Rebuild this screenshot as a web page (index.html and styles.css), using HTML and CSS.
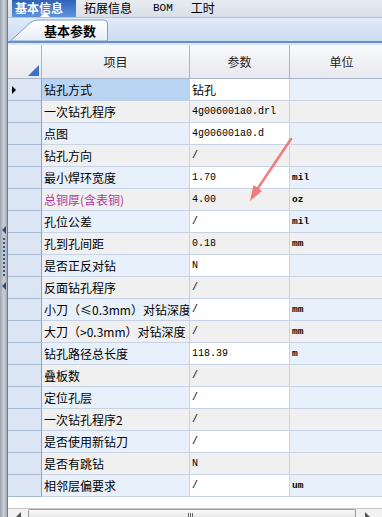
FILE: index.html
```html
<!DOCTYPE html>
<html lang="zh-CN">
<head>
    <meta charset="UTF-8">
    <title>基本参数</title>
    <link rel="stylesheet" href="styles.css">
</head>
<body>
    <div class="splitter">
        <span class="split-arrow"></span>
        <span class="split-grip"></span>
        <span class="split-arrow"></span>
    </div>

    <div class="main">
        <div class="tabbar">
            <div class="tab active">基本信息</div>
            <div class="tab t2">拓展信息</div>
            <div class="tab t3">BOM</div>
            <div class="tab t4">工时</div>
        </div>

        <div class="subtabs">
            <svg class="subtab-shape" width="100" height="24" viewBox="0 0 100 24">
                <defs>
                    <linearGradient id="tabfill" x1="0" y1="0" x2="0" y2="1">
                        <stop offset="0" stop-color="#ffffff"/>
                        <stop offset="1" stop-color="#e6eefa"/>
                    </linearGradient>
                </defs>
                <path d="M0.5 24 L21 5 Q24 3 28 3 L94 3 Q97.5 3 97.5 7 L97.5 24 Z" fill="url(#tabfill)" stroke="#7f9dcb" stroke-width="1"/>
            </svg>
            <span class="subtab-label">基本参数</span>
        </div>
        <div class="blue-line"></div>

        <div class="grid">
            <div class="hcell corner"><span class="corner-tri"></span></div>
            <div class="hcell">项目</div>
            <div class="hcell">参数</div>
            <div class="hcell">单位</div>
        </div>

        <div class="rows" id="rows"></div>

        <div class="scrollbar">
            <span class="sb-left"></span>
            <div class="sb-thumb"><span class="sb-grip"></span></div>
            <span class="sb-right"></span>
        </div>
    </div>

    <svg class="arrow" width="382" height="517" viewBox="0 0 382 517">
        <g opacity="0.85">
            <line x1="291" y1="139" x2="256" y2="191" stroke="#f06868" stroke-width="2.5" stroke-linecap="round"/>
            <polygon points="250,201 262,191 253.5,185" fill="#f06868"/>
        </g>
    </svg>

    <script>
        // filas de la tabla: [item, param, unidad, clase]
        const FILAS = [
            ['钻孔方式', '钻孔', '', 'cjk'],
            ['一次钻孔程序', '4g006001a0.drl', ''],
            ['点图', '4g006001a0.d', ''],
            ['钻孔方向', '/', ''],
            ['最小焊环宽度', '1.70', 'mil'],
            ['总铜厚(含表铜)', '4.00', 'oz', 'pink'],
            ['孔位公差', '/', 'mil'],
            ['孔到孔间距', '0.18', 'mm'],
            ['是否正反对钻', 'N', ''],
            ['反面钻孔程序', '/', ''],
            ['小刀（≤0.3mm）对钻深度', '/', 'mm'],
            ['大刀（>0.3mm）对钻深度', '/', 'mm'],
            ['钻孔路径总长度', '118.39', 'm'],
            ['叠板数', '/', ''],
            ['定位孔层', '/', ''],
            ['一次钻孔程序2', '/', ''],
            ['是否使用新钻刀', '/', ''],
            ['是否有跳钻', 'N', ''],
            ['相邻层偏要求', '/', 'um']
        ];

        const rows = document.getElementById('rows');
        FILAS.forEach(function (f, i) {
            const row = document.createElement('div');
            row.className = 'row ' + (i % 2 === 0 ? 'odd' : 'even');

            const head = document.createElement('div');
            head.className = 'rhead';
            if (i === 0) head.innerHTML = '<span class="pointer"></span>';

            const item = document.createElement('div');
            item.className = 'cell item' + (i === 0 ? ' selected' : '') + (f[3] === 'pink' ? ' pink' : '');
            item.textContent = f[0];

            const param = document.createElement('div');
            param.className = 'cell param' + (f[3] === 'cjk' ? ' cjk' : '');
            param.textContent = f[1];

            const unit = document.createElement('div');
            unit.className = 'cell unit';
            unit.textContent = f[2];

            row.append(head, item, param, unit);
            rows.appendChild(row);
        });
    </script>
</body>
</html>
```

FILE: styles.css
```css
body {
    margin: 0;
    width: 382px;
    height: 517px;
    overflow: hidden;
    display: flex;
    position: relative;
    background: #ffffff;
    font-family: "Noto Sans CJK SC", "DejaVu Sans", sans-serif;
    font-size: 12px;
    color: #000;
}

/* barra lateral izquierda */
.splitter {
    width: 7px;
    flex: none;
    border-right: 1px solid #6f7884;
    background: linear-gradient(to right, #9aa2ad, #c9ced6 50%, #a9b0ba);
    display: flex;
    flex-direction: column;
    align-items: center;
    padding-top: 226px;
    gap: 4px;
}
.split-arrow {
    width: 0;
    height: 0;
    border-top: 4px solid transparent;
    border-bottom: 4px solid transparent;
    border-right: 4px solid #2f4f7a;
}
.split-grip {
    width: 2px;
    height: 40px;
    background: repeating-linear-gradient(to bottom, #2f5a96 0 2px, transparent 2px 4px);
}

.main {
    flex: 1;
    min-width: 0;
    display: flex;
    flex-direction: column;
}

/* pestañas superiores */
.tabbar {
    height: 17px;
    flex: none;
    display: flex;
    padding-left: 4px;
    background: linear-gradient(to bottom, #e8ecf2, #d9dfe8);
    border-bottom: 1px solid #b9c3d1;
    overflow: hidden;
}
.tab {
    font-size: 12px;
    line-height: 16px;
    position: relative;
    white-space: nowrap;
}
.tab.t2 { margin-left: 8px; }
.tab.t3 {
    margin-left: 21px;
    font-family: "Liberation Mono", monospace;
    font-size: 11px;
}
.tab.t4 { margin-left: 18px; }
.tab.active {
    width: 61px;
    padding-left: 3px;
    color: #fff;
    font-weight: bold;
    background: linear-gradient(to bottom, #2f63b8, #5e93dc);
}
.tab.active::after {
    content: "";
    position: absolute;
    left: 28px;
    bottom: 0;
    border-left: 5px solid transparent;
    border-right: 5px solid transparent;
    border-bottom: 5px solid #fff;
}

/* pestaña secundaria */
.subtabs {
    height: 23px;
    flex: none;
    position: relative;
    background: linear-gradient(to bottom, #e2ebf8, #cadbf3);
}
.subtab-shape {
    position: absolute;
    left: 2px;
    bottom: 0;
}
.subtab-label {
    position: absolute;
    left: 36px;
    top: 5px;
    font-weight: bold;
    font-size: 13px;
    line-height: 16px;
}
.blue-line {
    height: 2px;
    flex: none;
    background: #6a8fc6;
    border-bottom: 2px solid #dce7f6;
}

/* cabecera de la tabla */
.grid {
    display: grid;
    grid-template-columns: 34px 148px 100px 104px;
    height: 33px;
    flex: none;
    background: linear-gradient(to bottom, #f8f9fb, #e6e9ee);
    border-bottom: 1px solid #a9b6c9;
}
.hcell {
    display: flex;
    align-items: center;
    justify-content: center;
    border-right: 1px solid #a9b6c9;
    color: #222;
}
.corner {
    position: relative;
}
.corner-tri {
    position: absolute;
    right: 2px;
    bottom: 2px;
    width: 0;
    height: 0;
    border-left: 11px solid transparent;
    border-bottom: 11px solid #3d73c4;
}

/* filas */
.rows {
    display: flex;
    flex-direction: column;
}
.row {
    display: grid;
    grid-template-columns: 34px 148px 100px 104px;
    height: 22px;
}
.rhead {
    background: #dbe5f3;
    border-right: 1px solid #8ea3c1;
    border-bottom: 1px solid #a8bad3;
    position: relative;
}
.pointer {
    position: absolute;
    left: 4px;
    top: 7px;
    border-top: 4px solid transparent;
    border-bottom: 4px solid transparent;
    border-left: 4px solid #000;
}
.cell {
    border-right: 1px solid #c6d3e7;
    border-bottom: 1px solid #c6d3e7;
    padding-left: 2px;
    display: flex;
    align-items: center;
    white-space: nowrap;
    overflow: hidden;
    font-size: 12px;
}
.param, .unit {
    font-family: "Liberation Mono", monospace;
    font-size: 10px;
}
.unit { font-weight: bold; font-size: 9.5px; }
.param.cjk {
    font-family: "Noto Sans CJK SC", sans-serif;
    font-size: 12px;
}
.odd .item, .odd .unit { background: #e8f0fb; }
.odd .param { background: #ffffff; }
.even .cell { background: #f0f0f0; }
.item.selected { background: #b9d3f3; }
.item.pink { color: #b2339c; }

/* barra de desplazamiento */
.scrollbar {
    margin-top: auto;
    height: 8px;
    display: flex;
    align-items: flex-start;
    border-top: 1px solid #c8c8c8;
    background: #f2f2f2;
    position: relative;
}
.sb-left {
    width: 0;
    height: 0;
    margin: 3px 0 0 8px;
    border-top: 5px solid transparent;
    border-right: 5px solid #555;
}
.sb-thumb {
    margin-left: 7px;
    width: 326px;
    height: 9px;
    border: 1px solid #9a9a9a;
    border-bottom: none;
    border-radius: 2px 2px 0 0;
    background: linear-gradient(to bottom, #fbfbfb, #e2e2e2);
    position: relative;
}
.sb-grip {
    position: absolute;
    left: 159px;
    top: 3px;
    width: 6px;
    height: 6px;
    background: repeating-linear-gradient(to right, #666 0 1px, transparent 1px 2px);
}
.sb-right {
    width: 0;
    height: 0;
    margin: 3px 0 0 9px;
    border-top: 5px solid transparent;
    border-left: 5px solid #555;
}

.arrow {
    position: absolute;
    left: 0;
    top: 0;
    pointer-events: none;
}
```
